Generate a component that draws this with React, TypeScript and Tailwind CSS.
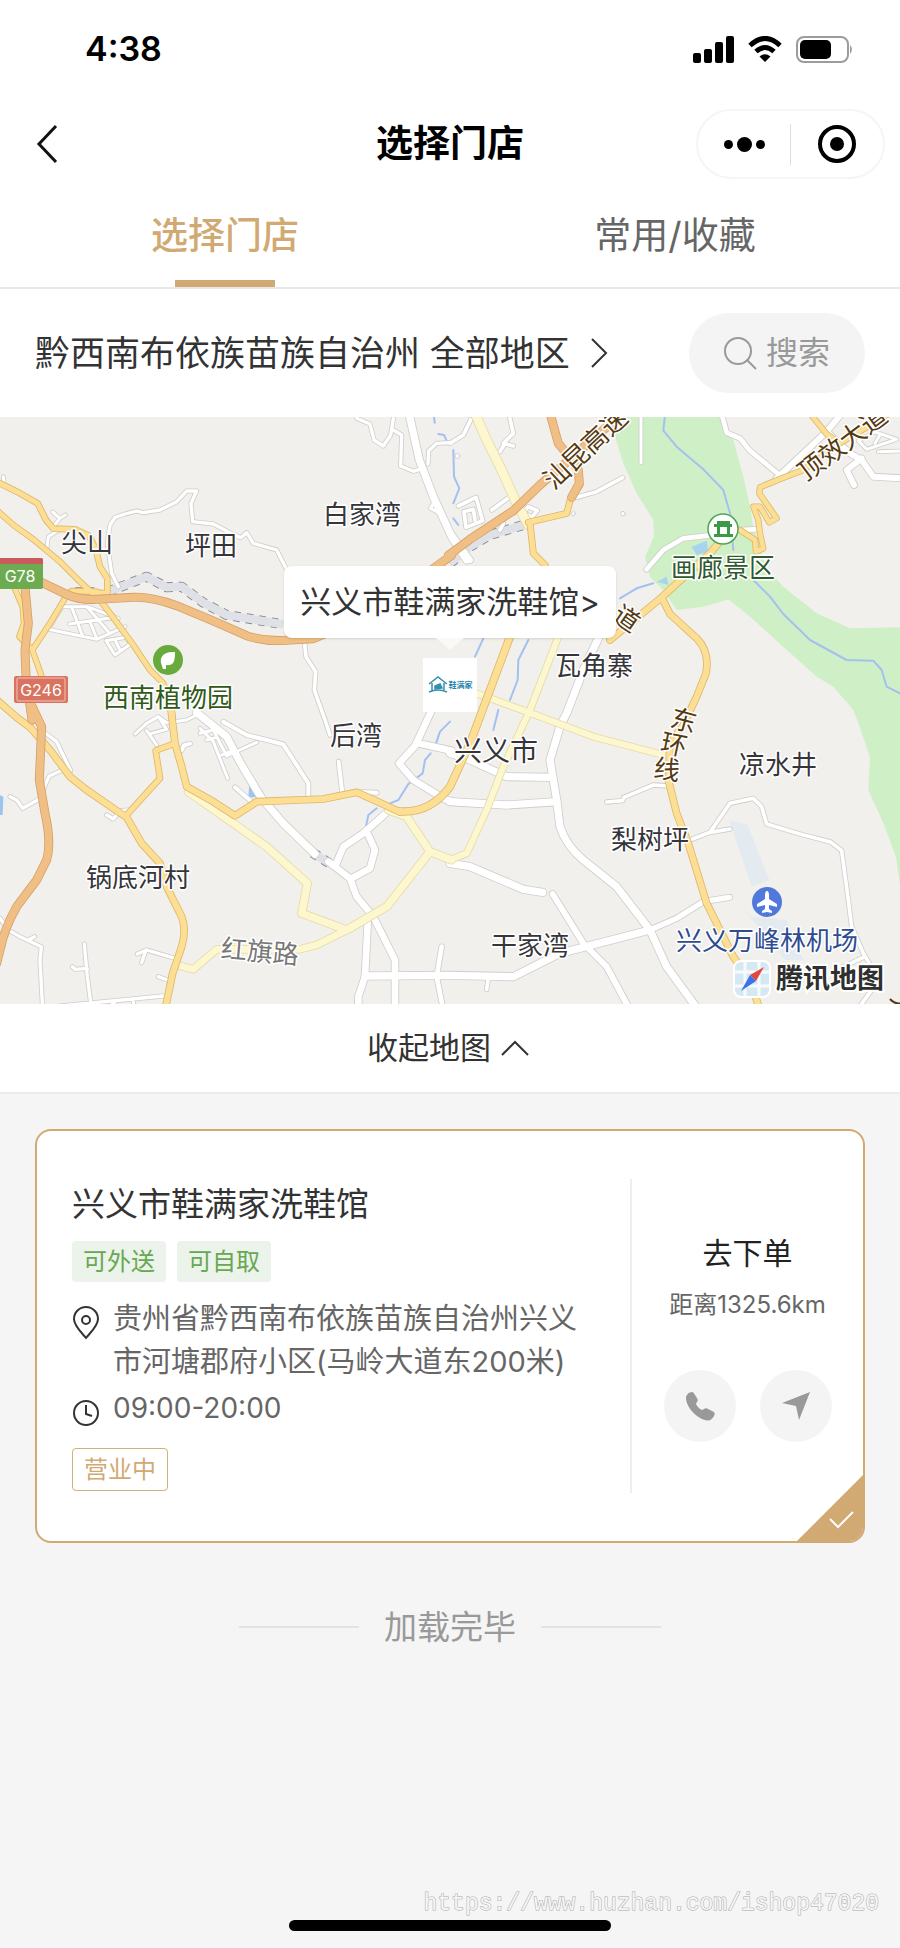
import React, { useState } from 'react';

type Tile = 'nw' | 'ne' | 'sw' | 'se';
type RoadKind = 'lane' | 'pale' | 'yellow' | 'orange';

interface Road {
    tile: Tile;
    kind: RoadKind;
    w: number;
    d: string;
}

interface MapLabel {
    text: string;
    x: number;
    y: number;
    size?: number;
    color?: string;
    rotate?: number;
}

// Every tile is drawn in its own units, three to a pixel
const tileOrigin: Record<Tile, string> = {
    nw: 'translate(0 -21)',
    ne: 'translate(1350 -21)',
    sw: 'translate(0 849)',
    se: 'translate(1350 849)',
};

const roadFill: Record<RoadKind, string> = {
    lane: '#ffffff',
    pale: '#fdf7d0',
    yellow: '#fcdf95',
    orange: '#efbf85',
};

const roadCasing: Record<RoadKind, string> = {
    lane: '#cfcecc',
    pale: '#e6dba4',
    yellow: '#dfb765',
    orange: '#d9a066',
};

const roadOrder: RoadKind[] = ['lane', 'pale', 'yellow', 'orange'];

const roads: Road[] = [
    // north west
    { tile: 'nw', kind: 'lane', w: 10, d: 'M355 530 L335 490 L322 400 L330 345 L345 322 L375 312 L410 303 L430 308 L480 300 L530 275 L560 243 L590 243 L573 280 L578 335 L640 342 L690 368 L722 383 L740 368 L760 400 L830 420 L858 475' },
    { tile: 'nw', kind: 'lane', w: 9, d: 'M180 358 L145 380 L140 420 M158 306 L180 325 L196 315 M180 325 L162 348 M10 200 L12 216' },
    { tile: 'nw', kind: 'lane', w: 10, d: 'M1070 25 L1110 42 L1122 90 L1150 108 L1172 75 L1180 26 M1180 60 L1205 75 L1202 168 L1240 184 L1268 175 M1284 162 L1286 122 L1310 100 L1350 98 M1310 305 L1292 295 L1304 272' },
    { tile: 'nw', kind: 'lane', w: 22, d: 'M1228 15 L1258 150 L1300 260 L1355 380 L1400 450' },
    { tile: 'nw', kind: 'lane', w: 9, d: 'M185 592 L145 658 L290 688 L375 650 M190 590 L262 590 L355 625 M208 642 L345 622 M215 592 L248 678 M262 592 L325 665 M270 635 L290 685 M318 692 L378 682 L392 702 L345 735 L318 692 M345 690 L360 720' },
    { tile: 'nw', kind: 'lane', w: 11, d: 'M913 690 L918 740 L947 785 L943 840 L975 930 L990 975' },
    { tile: 'nw', kind: 'yellow', w: 15, d: 'M-10 215 L60 250 L113 280 L138 330 L160 356 L225 358 L268 378 L288 420 L300 470 L322 505 L322 550 L285 548' },
    { tile: 'nw', kind: 'yellow', w: 14, d: 'M-10 300 L40 345 L100 388 L180 455 L240 515 L300 570 L345 630 L400 705 L450 780 L490 820 L510 870 L518 920' },
    { tile: 'nw', kind: 'yellow', w: 14, d: 'M230 545 L205 548 L150 640 L97 720 L122 790 L130 820 M42 530 L68 590 L72 640 L58 680 L97 720 M215 543 L290 545' },
    { tile: 'nw', kind: 'orange', w: 22, d: 'M75 530 L85 640 L75 720 L78 800 L92 900 L96 930' },
    { tile: 'nw', kind: 'orange', w: 22, d: 'M110 510 L200 553 Q235 570 290 568 L400 562 Q455 560 530 587 Q640 632 740 677 Q800 697 870 690 L940 686 L1100 620 L1355 436' },
    // north east
    { tile: 'ne', kind: 'lane', w: 11, d: 'M380 262 L440 245 L518 203 M180 26 L190 70 L160 100 L190 108 M150 125 L165 100 M0 100 L40 75 L62 30 M125 300 L180 260 M160 340 L150 360' },
    { tile: 'ne', kind: 'lane', w: 9, d: 'M573 10 L573 158 M1225 92 L1250 118 L1340 88 L1275 66 Z M1285 125 L1350 123 M1290 75 L1275 100' },
    { tile: 'ne', kind: 'lane', w: 11, d: 'M25 288 L78 262 L98 332 L48 352 L42 305 L70 298 L75 330 M235 290 L262 302 L245 322 L220 308 Z' },
    { tile: 'ne', kind: 'lane', w: 14, d: 'M590 478 L640 420 L700 385 L780 376 M870 360 L915 358 M816 15 L830 68 L870 85 L900 122 L985 192' },
    { tile: 'ne', kind: 'lane', w: 18, d: 'M980 205 L1130 65 L1175 10 M1130 65 L1200 130 L1235 150 L1270 200 L1360 205 M1235 145 L1190 180 L1212 225' },
    { tile: 'ne', kind: 'lane', w: 22, d: 'M452 670 L400 780 L352 905 L330 950 L300 1050 L320 1170 L330 1250 Q350 1310 400 1350 L500 1430 L600 1560 L650 1670 L745 1800' },
    { tile: 'ne', kind: 'lane', w: 18, d: 'M-5 360 L60 450' },
    { tile: 'ne', kind: 'pale', w: 26, d: 'M75 10 L110 90 L150 170 L200 280 L235 345' },
    { tile: 'ne', kind: 'pale', w: 18, d: 'M325 680 L240 900 L160 1070 L110 1200 L50 1330 L0 1350 L-60 1325 M80 850 L230 905 L430 980 L640 1035' },
    { tile: 'ne', kind: 'yellow', w: 16, d: 'M240 340 L250 430 L285 465 M235 337 L350 310 L362 265 L390 225' },
    { tile: 'ne', kind: 'yellow', w: 14, d: 'M1080 10 L1130 72 L1170 100 M1320 10 L1170 100 L1060 180 L975 213 L930 232 L928 250 L980 325 L958 337 L930 290 L910 290 L925 330 L930 370 L940 415 L918 425 L915 390 L870 360' },
    { tile: 'ne', kind: 'yellow', w: 18, d: 'M805 400 L780 430 L635 562 L480 690 M635 562 L660 612 L740 685 Q780 725 768 790 L740 860 L700 945 L660 1000 L655 1110 L680 1210 L715 1300 L770 1480 L850 1640 L900 1710 L930 1800' },
    { tile: 'ne', kind: 'yellow', w: 20, d: 'M180 680 L120 840 L60 1000 L0 1130 Q-60 1210 -150 1204' },
    { tile: 'ne', kind: 'orange', w: 22, d: 'M300 10 L325 100 L350 130 L385 180 L388 220 L365 262 M-5 436 L60 388 L190 302 L270 225 L340 165 L460 60 L520 10' },
    // south west
    { tile: 'sw', kind: 'lane', w: 9, d: 'M405 102 L440 70 L475 50 L500 68 L560 60 L590 45 M440 92 L470 135 M455 100 L500 88 L475 50 M600 85 L640 125 L683 235 M600 100 L640 90 L680 168 L770 127 M620 120 L650 112 M665 165 L690 155' },
    { tile: 'sw', kind: 'lane', w: 12, d: 'M670 65 L740 105 L800 120 L850 133 L925 250 L925 290 M1016 185 L1027 280 M1085 276 L1130 278 M705 262 L760 310 M545 150 L552 136 L570 131' },
    { tile: 'sw', kind: 'lane', w: 10, d: 'M130 95 L170 125 L212 212 M188 210 L148 228 L132 262 L128 292 L68 325 L50 300 L30 290 M320 345 L340 357 L360 332 L385 330' },
    { tile: 'sw', kind: 'lane', w: 10, d: 'M0 655 L28 692 L60 710 L124 740 L120 780 L128 930 M85 720 L104 710 M253 732 L262 830 L275 930 M217 800 L225 808 L262 805 M412 762 L440 750 L525 775 M425 788 L438 750 M475 830 L502 840 M180 918 L490 888 M400 905 L402 920 M345 905 L330 920' },
    { tile: 'sw', kind: 'lane', w: 22, d: 'M590 38 L680 110 L722 190 L785 295 L850 370 L945 462' },
    { tile: 'sw', kind: 'lane', w: 20, d: 'M985 485 L1050 535 L1070 590 L1120 650 L1185 780 L1185 930 M1005 500 L1030 440 L1090 400 L1155 342 M1105 405 L1125 450 L1110 505 L1055 535 M1103 670 L1095 830 L1075 890 L1075 930' },
    { tile: 'sw', kind: 'lane', w: 14, d: 'M1325 740 L1310 830 L1330 930' },
    { tile: 'sw', kind: 'lane', w: 22, d: 'M1095 828 L1350 826 L1540 830 L1680 760 L1950 690' },
    { tile: 'sw', kind: 'lane', w: 20, d: 'M1300 20 L1245 138 L1197 190 L1240 240 L1335 298 L1360 305 M1255 130 L1355 152' },
    { tile: 'sw', kind: 'pale', w: 22, d: 'M565 275 L700 370 L800 440 L922 550 L905 640 L1040 690 L1160 620 L1290 455 L1220 350 L1165 330 M1290 455 L1355 480' },
    { tile: 'sw', kind: 'pale', w: 20, d: 'M530 795 L580 808 L650 748 L900 748 L950 735 L1040 690' },
    { tile: 'sw', kind: 'yellow', w: 18, d: 'M-10 0 L50 52 L90 82 L150 150 L210 230 L260 270 L340 325 L380 352 L425 430 L480 490 L500 560 L545 650 Q560 690 545 740 L518 820 L495 930' },
    { tile: 'sw', kind: 'yellow', w: 15, d: 'M380 345 L480 235 L467 152 L525 130 M85 0 L95 65' },
    { tile: 'sw', kind: 'yellow', w: 18, d: 'M512 20 L525 130 L545 200 L560 260 L640 305 L705 347 L770 305 L970 297 L1070 277 L1140 308 L1200 336' },
    { tile: 'sw', kind: 'orange', w: 22, d: 'M92 10 L125 80 L118 240 L135 340 Q155 430 140 480 L110 540 L50 620 Q15 680 0 750 L-10 790' },
    // south east
    { tile: 'se', kind: 'lane', w: 22, d: 'M0 160 L60 180 L170 230 L300 232 M0 305 L170 315 L320 305 M0 490 L60 500 L220 568 L278 577' },
    { tile: 'se', kind: 'lane', w: 18, d: 'M308 582 L400 730 L470 800 L540 930' },
    { tile: 'se', kind: 'lane', w: 16, d: 'M600 690 L680 655 L760 605 L838 592' },
    { tile: 'se', kind: 'lane', w: 11, d: 'M470 306 L518 302 L522 292 L610 255 L655 258 M715 422 L780 397 L840 387 M780 397 L840 310 L910 295 L935 320 L950 372 L1060 405 L1140 425 L1175 452 L1195 600 L1205 680 L1240 760 L1270 810 L1265 870 L1225 925 M1180 800 L1245 770 M110 868 L114 840' },
];

const rails: { tile: Tile; d: string }[] = [
    { tile: 'nw', d: 'M225 547 L290 547 M325 545 L440 500 L500 532 L545 530 L610 578 L680 615 L850 643' },
    { tile: 'ne', d: 'M0 460 L60 410 L120 375 L220 345' },
    { tile: 'sw', d: 'M938 458 L992 492' },
];

const streams: { tile: Tile; d: string }[] = [
    { tile: 'nw', d: 'M1302 21 L1304 38 M1315 72 L1332 75 L1340 92' },
    { tile: 'ne', d: 'M645 15 L640 62 L680 110 L760 178 L820 240 L840 310 L850 420 M905 505 L960 560 L1000 612 L1080 690 L1190 750 L1270 752 L1295 780 L1310 830 L1350 850 M510 565 L560 535 L610 520 M235 690 L205 750 L203 810 L180 870 M10 120 L12 200 L28 235 L10 280 M10 325 L25 345 M100 685 L75 740 M145 900 L130 960' },
    { tile: 'sw', d: 'M1350 65 L1320 95 L1308 130 M1292 160 L1275 180 L1268 220 L1225 252 L1195 300 L1170 310 M1130 325 L1105 345 L1098 380' },
];

const labels: MapLabel[] = [
    { text: '白家湾', x: 362, y: 97 },
    { text: '坪田', x: 211, y: 128 },
    { text: '尖山', x: 87, y: 125 },
    { text: '西南植物园', x: 168, y: 280, color: '#2f5a17' },
    { text: '后湾', x: 356, y: 318 },
    { text: '锅底河村', x: 138, y: 460 },
    { text: '红旗路', x: 260, y: 534, color: '#777777', rotate: 5 },
    { text: '瓦角寨', x: 594, y: 248 },
    { text: '兴义市', x: 496, y: 334, size: 28 },
    { text: '凉水井', x: 778, y: 347 },
    { text: '梨树坪', x: 650, y: 422 },
    { text: '干家湾', x: 530, y: 528 },
    { text: '兴义万峰林机场', x: 767, y: 523, color: '#2e4c91' },
    { text: '画廊景区', x: 723, y: 150, color: '#2f5a2f' },
    { text: '汕昆高速', x: 585, y: 31, color: '#553a12', rotate: -43 },
    { text: '顶效大道', x: 842, y: 26, color: '#553a12', rotate: -37 },
    { text: '道', x: 627, y: 201, color: '#553a12', rotate: 35 },
    { text: '东', x: 684, y: 303, color: '#553a12', rotate: 15 },
    { text: '环', x: 674, y: 327, color: '#553a12', rotate: 12 },
    { text: '线', x: 667, y: 352, color: '#553a12', rotate: 8 },
];

const CityMap: React.FC = () => (
    <svg viewBox="0 0 900 587" className="block w-full h-auto" role="img" aria-label="门店地图">
        <rect width="900" height="587" fill="#f1f0ed" />
        <g transform="scale(0.33333)" fill="none" strokeLinejoin="round" strokeLinecap="round">
            {/* park land, runway and ponds */}
            <g transform={tileOrigin.ne} fill="#cfefc6">
                <path d="M540 15 L490 62 L520 160 L560 250 L610 330 L612 380 L585 440 L600 500 L640 540 L680 600 L760 590 L835 568 L900 620 L1000 710 L1100 800 L1150 830 L1210 900 L1225 940 L1260 1040 L1255 1140 L1300 1240 L1338 1340 L1350 1425 L1350 652 L1200 655 L1100 610 L1000 530 L950 475 L910 350 L900 290 L880 200 L850 90 L815 15 Z" />
                <path d="M725 410 L770 392 L775 425 L740 435 Z M620 515 L650 500 L655 525 Z" fill="#a9d3ee" />
            </g>
            <g transform={tileOrigin.se} fill="#e3ebf1">
                <path d="M838 362 L892 372 L958 540 L905 560 Z M868 612 L905 650 L1010 660 L1060 780 L1005 780 L940 700 Z" />
            </g>
            <g transform={tileOrigin.sw} fill="#9cc4f0">
                <path d="M0 285 L10 290 L8 345 L0 345 Z M748 250 L770 292 L745 292 Z" />
            </g>
            {streams.map((s) => (
                <g key={s.d} transform={tileOrigin[s.tile]}>
                    <path d={s.d} stroke="#a3c1f0" strokeWidth={6} />
                </g>
            ))}
            {rails.map((r) => (
                <g key={r.d} transform={tileOrigin[r.tile]} strokeLinecap="butt">
                    <path d={r.d} stroke="#7f868f" strokeWidth={30} strokeDasharray="20 18" />
                    <path d={r.d} stroke="#dfe1e6" strokeWidth={25} />
                </g>
            ))}
            {roadOrder.map((kind) => (
                <g key={kind}>
                    {roads.filter((r) => r.kind === kind).map((r) => (
                        <path key={r.d} d={r.d} transform={tileOrigin[r.tile]} stroke={roadCasing[kind]} strokeWidth={r.w + 5} />
                    ))}
                    {roads.filter((r) => r.kind === kind).map((r) => (
                        <path key={r.d} d={r.d} transform={tileOrigin[r.tile]} stroke={roadFill[kind]} strokeWidth={r.w} />
                    ))}
                </g>
            ))}
            <g transform={tileOrigin.ne} fill="#ffffff" stroke="#cfcecc" strokeWidth={3}>
                <circle cx="519" cy="311" r="7" />
                <circle cx="370" cy="311" r="6" />
                <circle cx="22" cy="138" r="7" />
            </g>
        </g>

        {/* road shields */}
        <rect x="-6" y="141" width="49" height="31" rx="2" fill="#6cab50" />
        <path d="M-6 141 H41 Q43 141 43 143 V147 H-6 Z" fill="#c9595c" />
        <text x="20" y="165" textAnchor="middle" fontSize="16" fill="#ffffff">G78</text>
        <rect x="14" y="259" width="54" height="27" rx="2" fill="#d9735f" />
        <rect x="17" y="261" width="48" height="23" rx="1" fill="none" stroke="#f2c4ba" />
        <text x="41" y="279" textAnchor="middle" fontSize="16" fill="#ffffff">G246</text>

        {/* botanical garden */}
        <circle cx="168" cy="243" r="15" fill="#68ab3c" />
        <path d="M162 249 C158 240 164 234 175 235 C175 244 174 249 166 248 L166 252 H163 Z" fill="#ffffff" />
        {/* scenic spot */}
        <circle cx="723" cy="112" r="15" fill="#ffffff" stroke="#4fa556" strokeWidth="1.5" />
        <path d="M717 104 H730 V107 H732 V110 H714 V107 H717 Z M717 110 H720 V117 H717 Z M727 110 H730 V117 H727 Z M714 117 H733 V120 H714 Z" fill="#3c9a46" />
        {/* airport */}
        <circle cx="767" cy="485" r="15" fill="#5179dc" />
        <path d="M767 474 C768.400 474 769 476 769 478 V482 L777 487 V490 L769 488 V492 L772 494 V496 L767 495 L762 496 V494 L765 492 V488 L757 490 V487 L765 482 V478 C765 476 765.600 474 767 474 Z" fill="#ffffff" />

        {labels.map((l) => (
            <text
                key={l.text}
                x={l.x}
                y={l.y}
                dy="10"
                textAnchor="middle"
                fontSize={l.size || 26}
                fill={l.color || '#35353a'}
                stroke="#ffffff"
                strokeWidth="3"
                strokeLinejoin="round"
                paintOrder="stroke"
                transform={l.rotate ? `rotate(${l.rotate} ${l.x} ${l.y})` : undefined}
            >
                {l.text}
            </text>
        ))}
        <path d="M890 582 Q895 588 902 586" stroke="#553a12" strokeWidth="2" fill="none" />
    </svg>
);

const StatusBar: React.FC = () => (
    <div className="h-[98px] pl-[85px] pr-[46px] flex items-center justify-between text-black">
        <span className="text-[34px] leading-10 font-semibold">4:38</span>
        <div className="flex items-center gap-[14px]">
            <svg width="41" height="27" viewBox="0 0 41 27">
                <rect x="0" y="17" width="8" height="10" rx="2" />
                <rect x="11" y="13" width="8" height="14" rx="2" />
                <rect x="22" y="6" width="8" height="21" rx="2" />
                <rect x="33" y="0" width="8" height="27" rx="2" />
            </svg>
            <svg width="34" height="27" viewBox="0 0 34 27" fill="none" stroke="#000" strokeWidth="5">
                <path d="M2 9.500 Q17 -4.500 32 9.500" />
                <path d="M8 15.500 Q17 7.500 26 15.500" />
                <path d="M17 26 L11.500 20.500 Q17 16 22.500 20.500 Z" fill="#000" stroke="none" />
            </svg>
            <svg width="58" height="27" viewBox="0 0 58 27">
                <rect x="1" y="1" width="51" height="25" rx="7" fill="none" stroke="#9c9c9c" strokeWidth="2" />
                <rect x="4" y="4" width="31" height="19" rx="5" />
                <path d="M54 9 Q58 13 54 18 Z" fill="#9c9c9c" />
            </svg>
        </div>
    </div>
);

const App: React.FC = () => {
    const [tab, setTab] = useState('select');
    const [mapOpen, setMapOpen] = useState(true);

    const tabs = [
        { id: 'select', name: '选择门店' },
        { id: 'favorite', name: '常用/收藏' },
    ];

    return (
        <div className="min-h-screen flex flex-col bg-[#f5f5f5] text-[#333333] font-['Inter','Noto_Sans_CJK_SC',sans-serif]">
            <header className="bg-white">
                <StatusBar />
                <div className="h-[92px] px-[15px] grid grid-cols-[1fr_auto_1fr] items-center">
                    <button type="button" aria-label="返回" className="justify-self-start pl-5">
                        <svg width="24" height="40" viewBox="0 0 24 40" fill="none" stroke="#111" strokeWidth="3">
                            <path d="M21 2 L4 20 L21 38" />
                        </svg>
                    </button>
                    <h1 className="text-[37px] leading-[44px] font-bold text-black">选择门店</h1>
                    <div className="justify-self-end w-[189px] h-[70px] rounded-full border-2 border-[#f5f5f5] flex items-center">
                        <button type="button" aria-label="更多" className="flex-1 flex justify-center items-center gap-1">
                            <span className="w-[9px] h-[9px] rounded-full bg-black"></span>
                            <span className="w-[15px] h-[15px] rounded-full bg-black"></span>
                            <span className="w-[9px] h-[9px] rounded-full bg-black"></span>
                        </button>
                        <span className="w-px h-[41px] bg-[#dddddd]"></span>
                        <button type="button" aria-label="关闭" className="flex-1 flex justify-center">
                            <span className="w-[38px] h-[38px] rounded-full border-4 border-black flex items-center justify-center">
                                <span className="w-[14px] h-[14px] rounded-full bg-black"></span>
                            </span>
                        </button>
                    </div>
                </div>
                <nav className="flex border-b-2 border-[#e8e8e8]">
                    {tabs.map((t) => (
                        <button
                            key={t.id}
                            type="button"
                            onClick={() => setTab(t.id)}
                            className={
                                tab === t.id
                                    ? 'flex-1 h-[97px] pt-[23px] flex flex-col items-center justify-between text-[37px] leading-[46px] font-medium text-[#d1a973]'
                                    : 'flex-1 h-[97px] pt-[23px] flex flex-col items-center justify-between text-[37px] leading-[46px] text-[#666666]'
                            }
                        >
                            {t.name}
                            {tab === t.id && <span className="w-[100px] h-[7px] bg-[#d1a973]"></span>}
                        </button>
                    ))}
                </nav>
                <div className="h-32 pl-[35px] pr-[35px] flex items-center justify-between">
                    <button type="button" className="flex items-center gap-5 text-[35px] leading-[44px]">
                        黔西南布依族苗族自治州 全部地区
                        <svg width="18" height="30" viewBox="0 0 18 30" fill="none" stroke="#333" strokeWidth="2">
                            <path d="M2 1 L16 15 L2 29" />
                        </svg>
                    </button>
                    <button type="button" className="w-44 h-20 rounded-full bg-[#f4f4f4] flex items-center justify-center gap-2 text-[32px] leading-10 text-[#999999]">
                        <svg width="34" height="34" viewBox="0 0 34 34" fill="none" stroke="#999" strokeWidth="2">
                            <circle cx="14" cy="15" r="13" />
                            <path d="M23 24 L32 33" />
                        </svg>
                        搜索
                    </button>
                </div>
            </header>

            {mapOpen && (
                <section className="relative overflow-hidden">
                    <CityMap />
                    <div className="absolute inset-x-0 top-[149px] flex flex-col items-center">
                        <button type="button" className="h-[72px] px-4 rounded-lg bg-white shadow-sm text-[31px] leading-10">
                            兴义市鞋满家洗鞋馆&gt;
                        </button>
                        <svg width="28" height="20" viewBox="0 0 28 20">
                            <path d="M0 0 H28 L14 12 Z" fill="#f9f9f8" />
                        </svg>
                        <div className="w-[54px] h-[54px] bg-white flex items-center justify-center gap-px">
                            <svg width="20" height="18" viewBox="0 0 20 18" fill="none" stroke="#3490ad" strokeWidth="1.500">
                                <path d="M1 8 L10 1 L19 8 M4 7 V15 M16 7 V14 M1 16 Q10 12 19 16" />
                                <path d="M7 13 V10 L12 8 L14 12 Z" fill="#3490ad" />
                            </svg>
                            <span className="text-[8px] leading-3 font-bold text-[#2b86ad]">鞋满家</span>
                        </div>
                    </div>
                    <div className="absolute right-4 bottom-1.5 flex items-center gap-[5px]">
                        <svg width="38" height="38" viewBox="0 0 38 38">
                            <rect x="1" y="1" width="36" height="36" rx="7" fill="#d5e9f3" stroke="#fff" strokeWidth="2" />
                            <path d="M2 12 H36 M2 26 H36 M12 2 V36 M26 2 V36" stroke="#f7fbfd" strokeWidth="3" />
                            <path d="M31 7 L23 21 L17 15 Z" fill="#e0493c" />
                            <path d="M8 31 L17 15 L23 21 Z" fill="#3d72e8" />
                        </svg>
                        <span className="text-[27px] leading-8 font-bold text-[#2f2f2f] [-webkit-text-stroke:4px_white] [paint-order:stroke]">腾讯地图</span>
                    </div>
                </section>
            )}

            <button
                type="button"
                onClick={() => setMapOpen(!mapOpen)}
                className="h-[90px] pr-1 bg-white border-b-2 border-[#ebebeb] flex items-center justify-center gap-[10px] text-[31px] leading-10"
            >
                {mapOpen ? '收起地图' : '展开地图'}
                <svg width="28" height="16" viewBox="0 0 28 16" fill="none" stroke="#333" strokeWidth="2">
                    <path d={mapOpen ? 'M1 15 L14 2 L27 15' : 'M1 1 L14 14 L27 1'} />
                </svg>
            </button>

            <main className="px-[35px] pt-[35px]">
                <article className="relative min-h-[414px] rounded-2xl border-2 border-[#d1a973] bg-white overflow-hidden py-12 pl-[35px] flex">
                    <div className="flex-1 min-w-0 flex flex-col items-start">
                        <h2 className="mt-1 text-[33px] leading-[42px]">兴义市鞋满家洗鞋馆</h2>
                        <div className="mt-4 flex gap-[11px] text-[24px] leading-[41px] text-[#68a850]">
                            <span className="px-[11px] rounded-sm bg-[#ebf3eb]">可外送</span>
                            <span className="px-[11px] rounded-sm bg-[#ebf3eb]">可自取</span>
                        </div>
                        <div className="mt-[15px] flex gap-[13px] text-[29px] leading-[43px] text-[#666666]">
                            <svg width="28" height="36" viewBox="0 0 28 36" fill="none" stroke="#333" strokeWidth="2" className="mt-2 shrink-0">
                                <path d="M14 33 C10 28 2 21 2 14 A12 12 0 0 1 26 14 C26 21 18 28 14 33 Z" />
                                <circle cx="14" cy="15" r="4" />
                            </svg>
                            <p className="w-[464px]">贵州省黔西南布依族苗族自治州兴义市河塘郡府小区(马岭大道东200米)</p>
                        </div>
                        <div className="mt-1 flex gap-[13px] text-[28px] leading-[43px] text-[#666666]">
                            <svg width="28" height="28" viewBox="0 0 28 28" fill="none" stroke="#333" strokeWidth="2" className="mt-3 shrink-0">
                                <circle cx="14" cy="14" r="12" />
                                <path d="M14 6 V15 L20 17" />
                            </svg>
                            <time>09:00-20:00</time>
                        </div>
                        <span className="mt-[18px] px-[11px] rounded-sm border border-[#d1b07a] text-[24px] leading-[41px] text-[#d1a973]">营业中</span>
                    </div>
                    <div className="w-[233px] border-l-2 border-[#eeeeee] flex flex-col items-center pt-[52px]">
                        <a href="#" className="text-[30px] leading-[44px] text-[#222222]">去下单</a>
                        <p className="mt-3 text-[24px] leading-9 text-[#666666]">距离1325.6km</p>
                        <div className="mt-[47px] flex gap-6">
                            <button type="button" aria-label="拨打电话" className="w-[72px] h-[72px] rounded-full bg-[#f4f4f4] flex items-center justify-center">
                                <svg width="30" height="30" viewBox="0 0 30 30" fill="#999">
                                    <path d="M1 7 C1 4 4 1 7 1 C8 1 9 2 10 4 L12.500 8 C13.500 10 11 12 11 13 C12 15.500 14.500 18 17 19 C18.500 19 20 16.500 22 17.500 L28 20.500 C30 21.500 30 23 29 25 C27.500 28 25 30 22 29.500 C12 28 1 16 1 7 Z" />
                                </svg>
                            </button>
                            <button type="button" aria-label="导航" className="w-[72px] h-[72px] rounded-full bg-[#f4f4f4] flex items-center justify-center">
                                <svg width="30" height="30" viewBox="0 0 30 30" fill="#999">
                                    <path d="M29 1 L18 29 L15 15 L1 12 Z" />
                                </svg>
                            </button>
                        </div>
                    </div>
                    <svg width="66" height="66" viewBox="0 0 66 66" className="absolute right-0 bottom-0">
                        <path d="M66 0 V66 H0 Z" fill="#d1a973" />
                        <path d="M33 44 L41 52 L56 37" fill="none" stroke="#fff" strokeWidth="2" />
                    </svg>
                </article>

                <div className="h-[168px] flex items-center justify-center gap-[25px] text-[33px] leading-[42px] text-[#999999]">
                    <span className="w-[120px] h-[2px] bg-[#e2e2e2]"></span>
                    加载完毕
                    <span className="w-[120px] h-[2px] bg-[#e2e2e2]"></span>
                </div>
            </main>

            <footer className="mt-auto pb-[17px] flex flex-col">
                <p className="self-end pr-[21px] text-[23px] leading-8 font-['Liberation_Mono',monospace] text-[#f5f5f5] [-webkit-text-stroke:1px_#a8a8a8] [paint-order:stroke]">
                    https://www.huzhan.com/ishop47020
                </p>
                <div className="self-center w-[322px] h-[11px] rounded-full bg-black"></div>
            </footer>
        </div>
    );
};

export default App;
